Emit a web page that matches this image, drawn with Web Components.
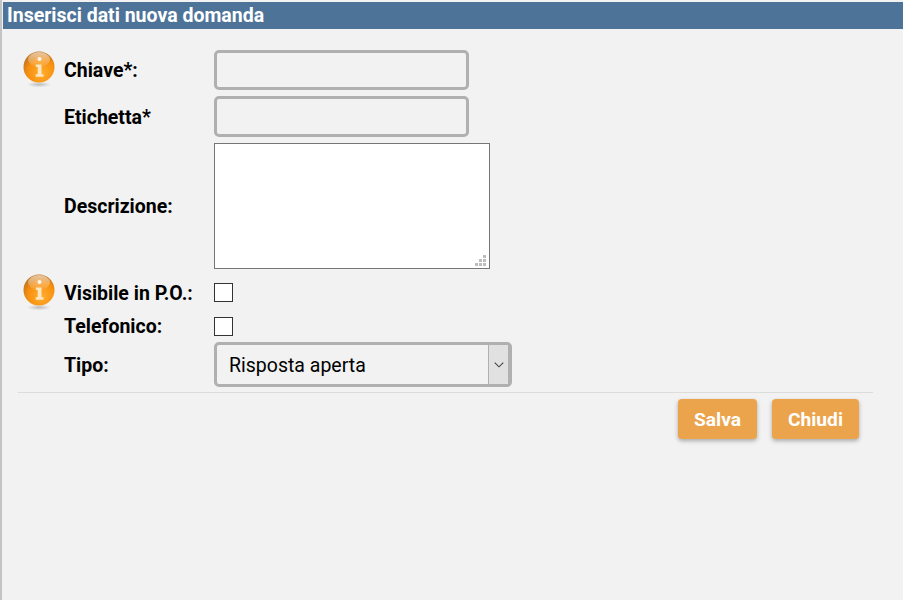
<!DOCTYPE html>
<html lang="it">
<head>
<meta charset="utf-8">
<title>Inserisci dati nuova domanda</title>
<style>
  html, body { margin: 0; height: 100%; background: #f2f2f2; }
  body { font-family: Roboto, "Liberation Sans", sans-serif; }
</style>
</head>
<body>
<template id="info-icon-tpl">
  <style>
    :host { display: block; width: 36px; height: 42px; }
    svg { display: block; }
  </style>
  <svg width="36" height="42" viewBox="0 0 36 42">
    <defs>
      <radialGradient id="ball" cx="0.58" cy="0.7" r="0.72">
        <stop offset="0" stop-color="#ffae2e"/>
        <stop offset="0.6" stop-color="#f8900f"/>
        <stop offset="1" stop-color="#b9701f"/>
      </radialGradient>
      <linearGradient id="shine" x1="0" y1="0" x2="0" y2="1">
        <stop offset="0" stop-color="#fff" stop-opacity=".6"/>
        <stop offset="1" stop-color="#fff" stop-opacity=".05"/>
      </linearGradient>
      <radialGradient id="drop">
        <stop offset="0" stop-color="#000" stop-opacity=".22"/>
        <stop offset="1" stop-color="#000" stop-opacity="0"/>
      </radialGradient>
    </defs>
    <ellipse cx="17" cy="34.5" rx="12" ry="3" fill="url(#drop)"/>
    <circle cx="17" cy="17" r="15.5" fill="url(#ball)"/>
    <ellipse cx="17" cy="9.5" rx="11" ry="7.5" fill="url(#shine)"/>
    <circle cx="17.5" cy="9" r="2" fill="#fff" opacity=".85"/>
    <path d="M13.8 14.5h5.7v9.8h2v2.4h-7.8v-2.4h2v-7.4h-1.9z" fill="#fde6c2"/>
  </svg>
</template>

<template id="form-row-tpl">
  <style>
    :host { display: grid; grid-template-columns: 22px 42px 150px 1fr; align-items: center; }
    .icon { grid-column: 2; justify-self: start; height: 34px; margin-top: -6px; }
    .label { grid-column: 3; padding-top: 1px; font-size: 19.5px; font-weight: 700; color: #000; white-space: nowrap; }
    .field { grid-column: 4; display: flex; align-items: center; }
  </style>
  <div class="icon"><slot name="icon"></slot></div>
  <div class="label"></div>
  <div class="field"><slot></slot></div>
</template>

<template id="text-field-tpl">
  <style>
    :host { display: block; }
    input {
      display: block; box-sizing: border-box; width: 255px; height: var(--h, 40px); margin: 0; padding: 0 10px;
      border: 3px solid #b0b0b0; border-radius: 5px; background: #f2f2f2; outline: 0;
      font: 19.2px Roboto, sans-serif;
    }
  </style>
  <input type="text">
</template>

<template id="text-area-tpl">
  <style>
    :host { display: block; position: relative; width: 276px; height: 126px; }
    textarea {
      display: block; box-sizing: border-box; width: 100%; height: 100%; margin: 0; padding: 4px;
      border: 1px solid #767676; border-radius: 0; background: #fff; outline: 0; resize: none;
    }
    svg { position: absolute; right: 4px; bottom: 3px; }
  </style>
  <textarea></textarea>
  <svg width="11" height="11" viewBox="0 0 11 11" fill="#bdbdbd">
    <rect x="8" y="0" width="3" height="3"/>
    <rect x="4" y="4" width="3" height="3"/><rect x="8" y="4" width="3" height="3"/>
    <rect x="0" y="8" width="3" height="3"/><rect x="4" y="8" width="3" height="3"/><rect x="8" y="8" width="3" height="3"/>
  </svg>
</template>

<template id="check-box-tpl">
  <style>
    :host { display: block; width: 19px; height: 19px; }
    input {
      appearance: none; display: block; box-sizing: border-box; width: 19px; height: 19px; margin: 0;
      border: 1px solid #333; border-radius: 0; background: #fff;
    }
  </style>
  <input type="checkbox">
</template>

<template id="select-box-tpl">
  <style>
    :host {
      display: flex; box-sizing: border-box; width: 298px; height: 45px;
      border: 3px solid #b0b0b0; border-right-width: 4px; border-radius: 5px; background: #f2f2f2;
      font: 19.5px Roboto, sans-serif; color: #000;
    }
    .value { flex: 1; display: flex; align-items: center; padding: 1px 0 0 12px; }
    .btn {
      width: 19px; display: flex; align-items: center; justify-content: center;
      border-left: 1px solid #b0b0b0; background: #e1e1e1;
    }
  </style>
  <div class="value"><slot></slot></div>
  <div class="btn">
    <svg width="10" height="6" viewBox="0 0 10 6"><path d="M.7.7 5 4.8 9.3.7" fill="none" stroke="#444" stroke-width="1.1"/></svg>
  </div>
</template>

<template id="action-button-tpl">
  <style>
    :host { display: block; }
    button {
      display: block; box-sizing: border-box; height: 40px; padding: 0 16px; border: 0; border-radius: 4px;
      background: #eca44c; color: #fff; font: 700 19.2px Roboto, sans-serif;
      box-shadow: 0 2px 4px rgba(0,0,0,.3);
    }
  </style>
  <button type="button"><slot></slot></button>
</template>

<template id="form-panel-tpl">
  <style>
    :host { display: block; box-sizing: border-box; min-height: 100vh; padding-top: 2px; padding-left: 3px; position: relative; background: #f2f2f2; }
    :host::before { content: ""; position: absolute; left: 0; top: 0; bottom: 0; width: 2px; background: #c4c4c4; }
    h1 {
      margin: 0; height: 27px; padding-left: 4px; box-sizing: border-box;
      background: #4e7399; color: #fff; font: 700 19.5px/27px Roboto, sans-serif;
    }
    .body { padding: 21px 0 0 0; margin-left: -3px; }
    .foot { margin: 5px 30px 0 15px; border-top: 1px solid #dcdcdc; padding: 6px 14px 0 0; display: flex; justify-content: flex-end; gap: 15px; }
  </style>
  <h1></h1>
  <div class="body"><slot></slot></div>
  <div class="foot"><slot name="actions"></slot></div>
</template>

<form-panel heading="Inserisci dati nuova domanda">
  <form-row label="Chiave*:" style="height:40px;margin-bottom:6px"><info-icon slot="icon"></info-icon><text-field></text-field></form-row>
  <form-row label="Etichetta*" style="height:41px;margin-bottom:6px"><text-field style="--h:41px"></text-field></form-row>
  <form-row label="Descrizione:" style="height:126px;margin-bottom:6px"><text-area></text-area></form-row>
  <form-row label="Visibile in P.O.:" style="height:35px"><info-icon slot="icon"></info-icon><check-box></check-box></form-row>
  <form-row label="Telefonico:" style="height:32px"><check-box></check-box></form-row>
  <form-row label="Tipo:" style="height:45px"><select-box>Risposta aperta</select-box></form-row>
  <action-button slot="actions">Salva</action-button>
  <action-button slot="actions">Chiudi</action-button>
</form-panel>

<script>
  // every element just clones its template into an open shadow root
  function fromTemplate(id) {
    return class extends HTMLElement {
      constructor() {
        super();
        this.attachShadow({ mode: 'open' }).appendChild(document.getElementById(id).content.cloneNode(true));
      }
    };
  }

  customElements.define('info-icon', fromTemplate('info-icon-tpl'));
  customElements.define('text-field', fromTemplate('text-field-tpl'));
  customElements.define('text-area', fromTemplate('text-area-tpl'));
  customElements.define('check-box', fromTemplate('check-box-tpl'));
  customElements.define('select-box', fromTemplate('select-box-tpl'));
  customElements.define('action-button', fromTemplate('action-button-tpl'));

  customElements.define('form-row', class extends fromTemplate('form-row-tpl') {
    connectedCallback() {
      this.shadowRoot.querySelector('.label').textContent = this.getAttribute('label');
    }
  });

  customElements.define('form-panel', class extends fromTemplate('form-panel-tpl') {
    connectedCallback() {
      this.shadowRoot.querySelector('h1').textContent = this.getAttribute('heading');
    }
  });
</script>
</body>
</html>
